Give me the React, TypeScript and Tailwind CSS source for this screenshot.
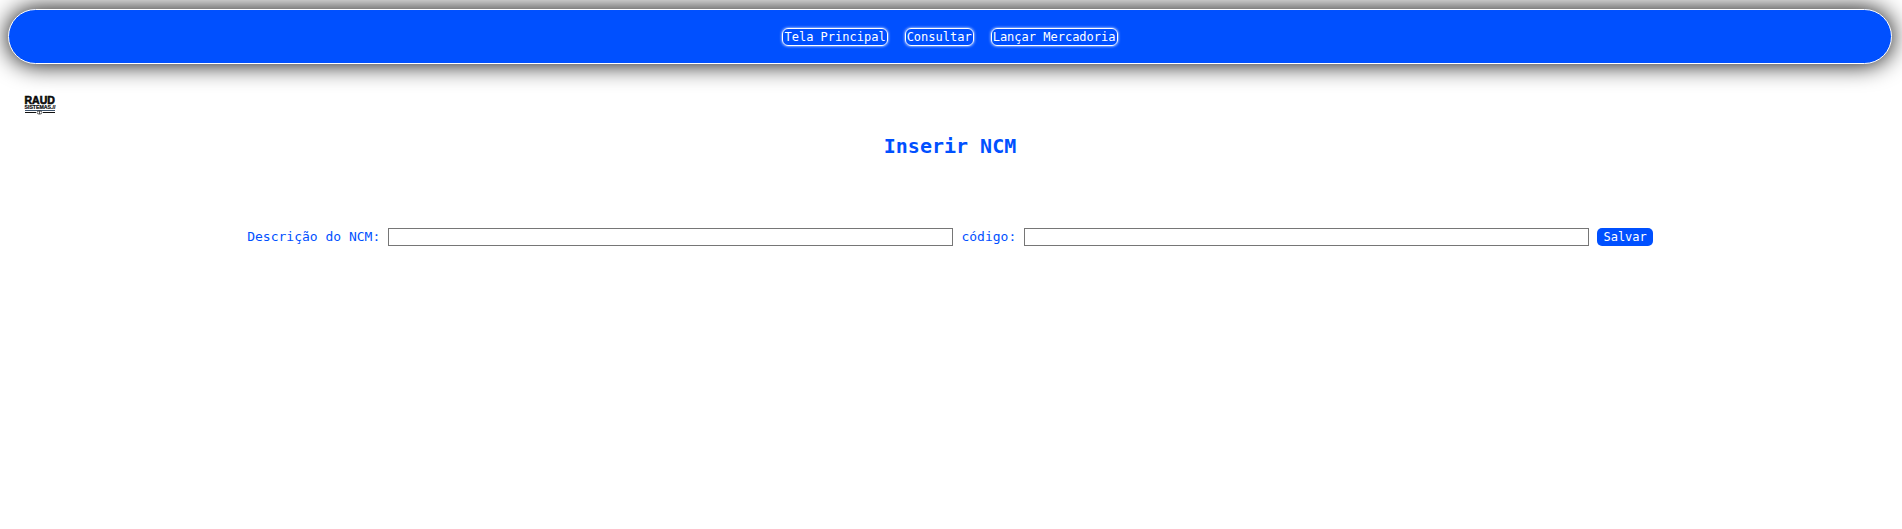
const links = ["Tela Principal", "Consultar", "Lançar Mercadoria"];

function Logo() {
  return (
    <svg width="32" height="22" viewBox="0 0 32 22" role="img" aria-label="Raud Sistemas">
      <g fontFamily="Liberation Sans, Arial, sans-serif" fontWeight="700" fill="#0a0a0a" stroke="#0a0a0a">
        <text x="0.5" y="9.5" fontSize="10.5" strokeWidth="0.6">RAUD</text>
        <text x="0.5" y="14.5" fontSize="5.2" strokeWidth="0.2">SISTEMAS.//</text>
      </g>
      <path d="M1 16.5H31" stroke="#3f556e" strokeWidth="1" />
      <path d="M1 18.5H12M19 18.5H31" stroke="#111" strokeWidth="1" />
      <ellipse cx="15.5" cy="18.5" rx="2.5" ry="1.6" fill="#fff" stroke="#333" strokeWidth="0.8" />
      <path d="M15.5 17V20" stroke="#333" strokeWidth="0.8" />
    </svg>
  );
}

export default function App() {
  return (
    <div className="font-['DejaVu_Sans_Mono',monospace] text-[13px] leading-4 text-[#0050ff]">
      <header className="mt-[9px] mr-[10px] ml-2 flex h-[55px] items-center justify-center rounded-full border border-white bg-[#0050ff] shadow-[0_0_25px_#000]">
        <nav className="flex gap-[17px]">
          {links.map((label) => (
            <a
              key={label}
              href="#"
              className="rounded-md border border-white px-px text-xs leading-4 text-white shadow-[0_0_3px_#fff]"
            >
              {label}
            </a>
          ))}
        </nav>
      </header>
      <main className="mr-[10px] ml-2">
        <div className="mt-[30px] ml-4">
          <Logo />
        </div>
        <h1 className="mt-4 text-center text-xl leading-7 font-bold">Inserir NCM</h1>
        <form className="mt-[68px] flex items-center justify-center gap-2">
          <label htmlFor="descricao">Descrição do NCM:</label>
          <input id="descricao" type="text" className="h-[18px] w-[30%] border border-[#767676] bg-white px-1 outline-none" />
          <label htmlFor="codigo">código:</label>
          <input id="codigo" type="text" className="h-[18px] w-[30%] border border-[#767676] bg-white px-1 outline-none" />
          <button type="button" className="rounded-[5px] bg-[#0050ff] px-1.5 text-xs leading-[18px] text-white">
            Salvar
          </button>
        </form>
      </main>
    </div>
  );
}
